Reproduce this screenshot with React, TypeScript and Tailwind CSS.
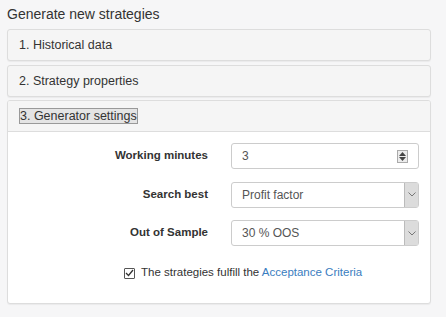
import React from "react";

function Spinner() {
  return (
    <div className="flex h-[13px] w-[11px] flex-col items-center justify-center gap-[1px] border border-[#aaa] bg-[#ececec]">
      <svg width="7" height="4" viewBox="0 0 7 4"><path d="M0 4 L3.5 0 L7 4 Z" fill="#444" /></svg>
      <svg width="7" height="4" viewBox="0 0 7 4"><path d="M0 0 L3.5 4 L7 0 Z" fill="#444" /></svg>
    </div>
  );
}

function SelectBox({ value }: { value: string }) {
  return (
    <div className="flex h-[26px] w-[188px] items-stretch rounded-[3px] border border-[#ccc] bg-white">
      <div className="flex flex-1 items-center pl-[10px] text-[12px] text-[#555]">{value}</div>
      <div className="flex w-[14px] items-center justify-center border-l border-[#bbb] bg-[#dcdcdc]">
        <svg width="8" height="5" viewBox="0 0 8 5"><path d="M0.5 0.5 L4 4 L7.5 0.5" fill="none" stroke="#777" strokeWidth="1" /></svg>
      </div>
    </div>
  );
}

function Row({ label, children }: { label: string; children: React.ReactNode }) {
  return (
    <div className="flex items-center">
      <div className="w-[200px] text-right text-[11.5px] font-bold text-[#333]">{label}</div>
      <div className="ml-[23px]">{children}</div>
    </div>
  );
}

export default function App() {
  return (
    <div
      className="h-[317px] w-[446px] bg-[#f6f6f7] pl-[7px] pt-[5px] text-[#333]"
      style={{ fontFamily: '"Liberation Sans", Arial, sans-serif' }}
    >
      <div className="h-[24px] text-[14px] leading-[18px]">Generate new strategies</div>
      <div className="w-[424px]">
        <div className="flex h-[32px] items-center rounded-[3px] border border-[#ddd] bg-[#f5f5f5] pl-[11px] text-[12.5px] shadow-[0_1px_1px_rgba(0,0,0,0.05)]">
          1. Historical data
        </div>
        <div className="mt-[4px] flex h-[32px] items-center rounded-[3px] border border-[#ddd] bg-[#f5f5f5] pl-[11px] text-[12.5px] shadow-[0_1px_1px_rgba(0,0,0,0.05)]">
          2. Strategy properties
        </div>
        <div className="mt-[3px] overflow-hidden rounded-[3px] border border-[#ddd] bg-white shadow-[0_1px_1px_rgba(0,0,0,0.05)]">
          <div className="flex h-[31px] items-center border-b border-[#ddd] bg-[#f5f5f5] pl-[11px] text-[12.5px]">
            <span className="border border-[#999] bg-[#e4e4e4] leading-[14px]">3. Generator settings</span>
          </div>
          <div className="flex flex-col gap-[12.5px] pt-[11px]">
            <Row label="Working minutes">
              <div className="flex h-[26px] w-[188px] items-center justify-between rounded-[3px] border border-[#ccc] bg-white pl-[10px] pr-[10px] text-[12px] text-[#555]">
                <span>3</span>
                <Spinner />
              </div>
            </Row>
            <Row label="Search best">
              <SelectBox value="Profit factor" />
            </Row>
            <Row label="Out of Sample">
              <SelectBox value="30 % OOS" />
            </Row>
          </div>
          <div className="flex h-[57px] items-center pb-[3px] pl-[116px] text-[11.5px]">
            <div className="flex h-[11px] w-[11px] items-center justify-center rounded-[1px] border border-[#555] bg-white">
              <svg width="9" height="8" viewBox="0 0 9 8"><path d="M1 4 L3.5 6.5 L8 1" fill="none" stroke="#333" strokeWidth="1.3" /></svg>
            </div>
            <span className="ml-[6px]">
              The strategies fulfill the <span className="text-[#3a7dc0]">Acceptance Criteria</span>
            </span>
          </div>
        </div>
      </div>
    </div>
  );
}
